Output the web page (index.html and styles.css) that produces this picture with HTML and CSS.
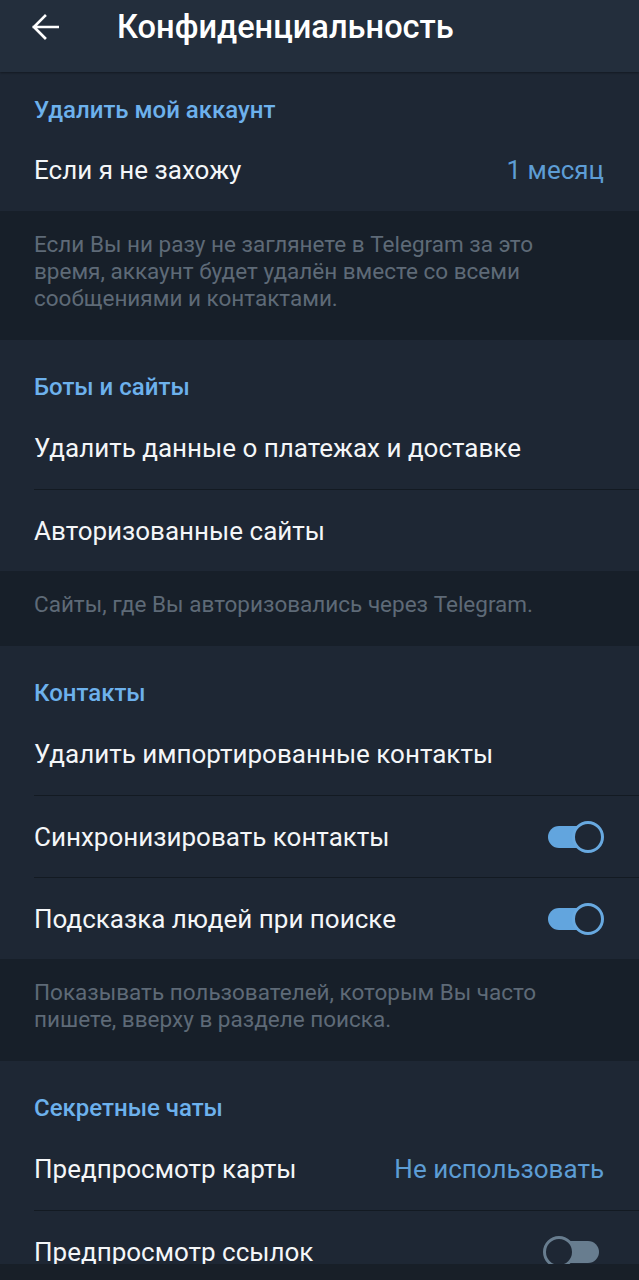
FILE: index.html
```html
<!DOCTYPE html>
<html lang="ru">
<head>
  <meta charset="UTF-8" />
  <meta name="viewport" content="width=device-width, initial-scale=1" />
  <title>Конфиденциальность</title>
  <link rel="stylesheet" href="styles.css">
</head>
<body>
  <div class="page">

    <header class="topbar">
      <svg class="back" viewBox="0 0 24 24" width="38" height="38">
        <path d="M20 12H5M12 5l-7 7 7 7" fill="none" stroke="#fff" stroke-width="1.7" stroke-linecap="square" />
      </svg>
      <h1>Конфиденциальность</h1>
    </header>

    <!-- удалить аккаунт -->
    <section class="section first">
      <div class="section-title">Удалить мой аккаунт</div>
      <div class="row">
        <span>Если я не захожу</span>
        <span class="value">1 месяц</span>
      </div>
    </section>
    <p class="info">Если Вы ни разу не заглянете в Telegram за это время, аккаунт будет удалён вместе со всеми сообщениями и контактами.</p>

    <!-- боты -->
    <section class="section">
      <div class="section-title">Боты и сайты</div>
      <div class="row">
        <span>Удалить данные о платежах и доставке</span>
      </div>
      <div class="row">
        <span>Авторизованные сайты</span>
      </div>
    </section>
    <p class="info">Сайты, где Вы авторизовались через Telegram.</p>

    <!-- контакты -->
    <section class="section">
      <div class="section-title">Контакты</div>
      <div class="row">
        <span>Удалить импортированные контакты</span>
      </div>
      <div class="row">
        <span>Синхронизировать контакты</span>
        <span class="switch on"></span>
      </div>
      <div class="row">
        <span>Подсказка людей при поиске</span>
        <span class="switch on"></span>
      </div>
    </section>
    <p class="info">Показывать пользователей, которым Вы часто пишете, вверху в разделе поиска.</p>

    <!-- секретные чаты -->
    <section class="section">
      <div class="section-title">Секретные чаты</div>
      <div class="row">
        <span>Предпросмотр карты</span>
        <span class="value">Не использовать</span>
      </div>
      <div class="row">
        <span>Предпросмотр ссылок</span>
        <span class="switch off"></span>
      </div>
    </section>

    <div class="navbar"></div>
  </div>
</body>
</html>
```

FILE: styles.css
```css
body {
  margin: 0;
  font-family: Roboto, "Noto Sans", sans-serif;
  background-color: #171f29;
  color: #f4f6f8;
}
.page {
  position: relative;
  height: 1280px;
  overflow: hidden;
}
.topbar {
  height: 72px;
  box-sizing: border-box;
  padding: 0 0 18px 26px;
  display: flex;
  align-items: center;
  background-color: #232e3c;
  box-shadow: 0 1px 2px rgba(0,0,0,0.35);
  position: relative;
  z-index: 1;
}
.back {
  display: block;
}
.topbar h1 {
  margin: 0 0 0 53px;
  font-size: 32.6px;
  font-weight: 500;
  color: #fff;
}
.section {
  background-color: #1e2734;
}
.section-title {
  height: 67px;
  box-sizing: border-box;
  padding: 35px 0 0 34px;
  line-height: 24px;
  font-size: 24px;
  font-weight: 500;
  color: #6db1ec;
}
.section.first .section-title {
  height: 57px;
  padding-top: 26px;
}
.row {
  height: 82px;
  box-sizing: border-box;
  margin-left: 34px;
  padding-right: 35px;
  display: flex;
  align-items: center;
  justify-content: space-between;
  font-size: 26px;
}
.row + .row {
  border-top: 1px solid #131a22;
}
.value {
  color: #5d9dd5;
}
.info {
  margin: 0;
  padding: 20px 34px 28px 34px;
  font-size: 22.5px;
  line-height: 27px;
  color: #5e6a77;
}
.switch {
  position: relative;
  width: 56px;
  height: 32px;
}
.switch::before {
  content: "";
  position: absolute;
  top: 5px;
  height: 22px;
  border-radius: 11px;
}
.switch::after {
  content: "";
  position: absolute;
  top: 0;
  width: 26px;
  height: 26px;
  border-radius: 50%;
  border: 3px solid;
  background-color: #1e2734;
}
.switch.on::before {
  left: 0;
  right: 10px;
  background-color: #62a5de;
}
.switch.on::after {
  right: 0;
  border-color: #68a9e0;
}
.switch.off {
  margin-right: 5px;
}
.switch.off::before {
  left: 10px;
  right: 0;
  background-color: #687d8f;
}
.switch.off::after {
  left: 0;
  border-color: #687d8f;
}
.navbar {
  position: absolute;
  left: 0;
  right: 0;
  bottom: 0;
  height: 16px;
  background-color: #181f28;
}
```
